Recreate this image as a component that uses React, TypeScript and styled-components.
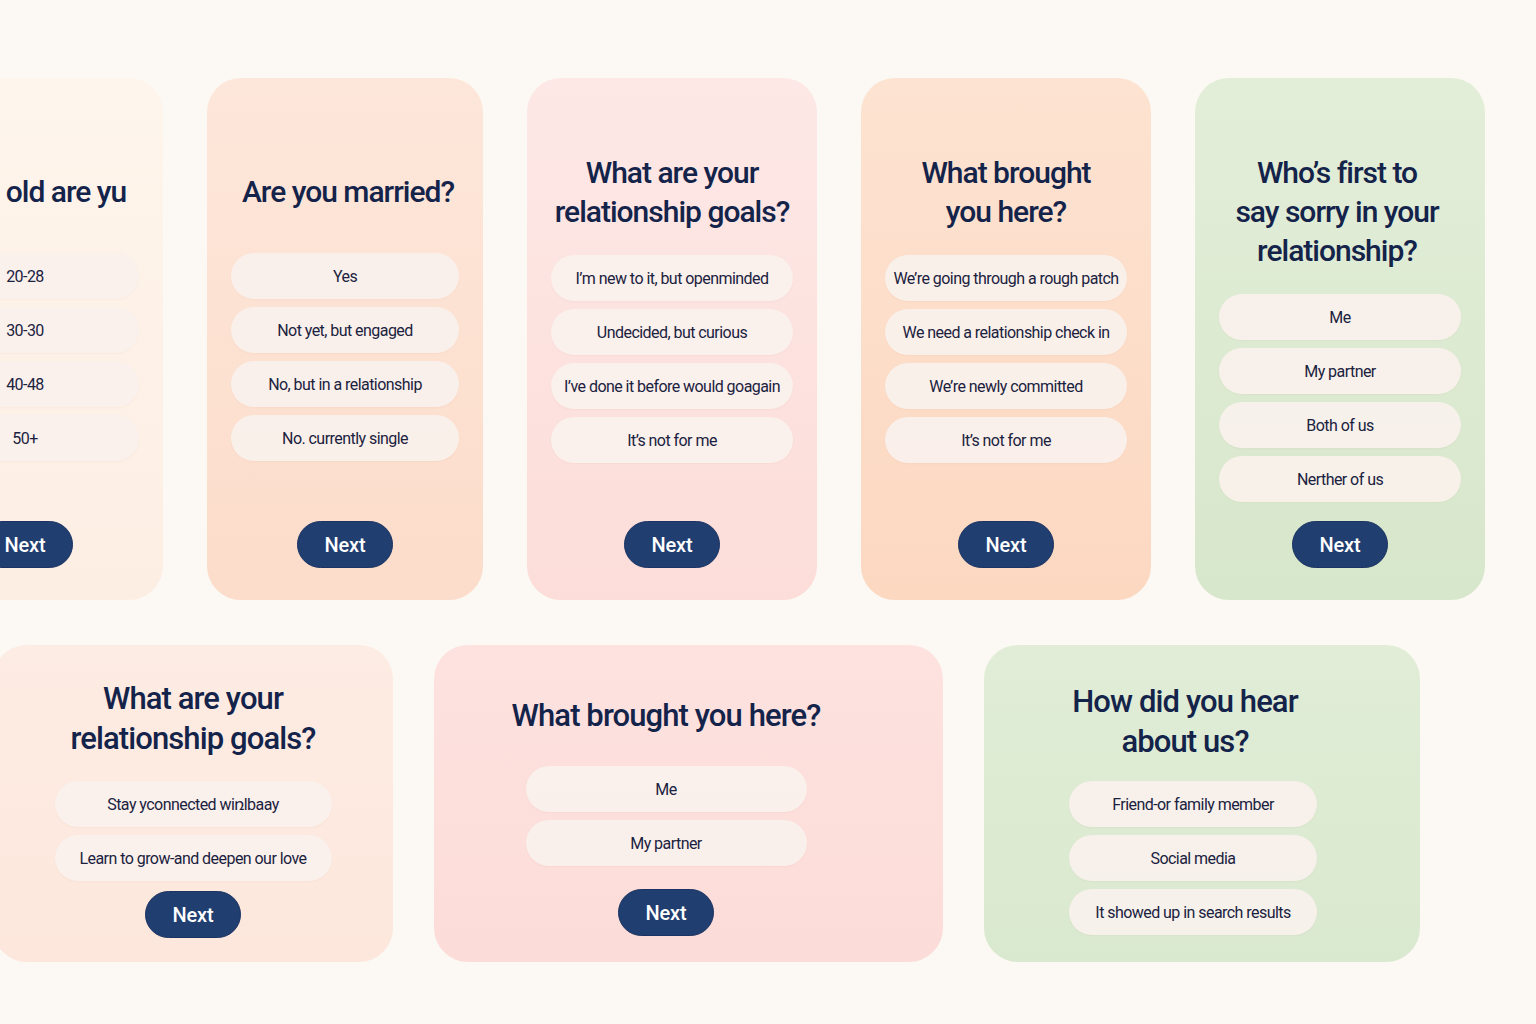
import styled, { createGlobalStyle } from 'styled-components';

const GlobalStyle = createGlobalStyle`
  html, body {
    margin: 0;
    padding: 0;
    background: #fcf8f3;
    overflow: hidden;
  }
  body {
    font-family: Roboto, 'Liberation Sans', sans-serif;
  }
`;

type TopCardData = {
  title: string[];
  options: string[];
  width: number;
  bg: string;
  titleShift?: number;
};

type BottomCardData = {
  title: string[];
  options: string[];
  width: number;
  optionWidth: number;
  bg: string;
  padTop: number;
  padRight: number;
  titleGap: number;
  titleShift?: number;
  buttonGap?: number;
};

const topCards: TopCardData[] = [
  {
    title: ['How old are yu'],
    options: ['20-28', '30-30', '40-48', '50+'],
    width: 276,
    bg: 'linear-gradient(180deg, #fef5ec 0%, #fdeee3 100%)',
    titleShift: 18,
  },
  {
    title: ['Are you married?'],
    options: ['Yes', 'Not yet, but engaged', 'No, but in a relationship', 'No. currently single'],
    width: 276,
    bg: 'linear-gradient(180deg, #fde7da 0%, #fcdcca 100%)',
    titleShift: 6,
  },
  {
    title: ['What are your', 'relationship goals?'],
    options: [
      'I’m new to it, but openminded',
      'Undecided, but curious',
      'I’ve done it before would goagain',
      'It’s not for me',
    ],
    width: 290,
    bg: 'linear-gradient(180deg, #fde8e6 0%, #fcddd9 100%)',
  },
  {
    title: ['What brought', 'you here?'],
    options: [
      'We’re going through a rough patch',
      'We need a relationship check in',
      'We’re newly committed',
      'It’s not for me',
    ],
    width: 290,
    bg: 'linear-gradient(180deg, #fde3d1 0%, #fcd8c1 100%)',
  },
  {
    title: ['Who’s first to', 'say sorry in your', 'relationship?'],
    options: ['Me', 'My partner', 'Both of us', 'Nerther of us'],
    width: 290,
    bg: 'linear-gradient(180deg, #e3eed9 0%, #d7e7cb 100%)',
    titleShift: -6,
  },
];

const bottomCards: BottomCardData[] = [
  {
    title: ['What are your', 'relationship goals?'],
    options: ['Stay yconnected wiռlbaay', 'Learn to grow-and deepen our love'],
    width: 400,
    optionWidth: 277,
    bg: 'linear-gradient(180deg, #fdece3 0%, #fde7dc 100%)',
    padTop: 34,
    padRight: 0,
    titleGap: 22,
    buttonGap: 10,
  },
  {
    title: ['What brought you here?'],
    options: ['Me', 'My partner'],
    width: 509,
    optionWidth: 281,
    bg: 'linear-gradient(180deg, #fde2df 0%, #fcdcd8 100%)',
    padTop: 51,
    padRight: 45,
    titleGap: 30,
    buttonGap: 23,
  },
  {
    title: ['How did you hear', 'about us?'],
    options: ['Friend-or family member', 'Social media', 'It showed up in search results'],
    width: 436,
    optionWidth: 248,
    bg: 'linear-gradient(180deg, #e1edd7 0%, #d9e9cf 100%)',
    padTop: 37,
    padRight: 18,
    titleGap: 19,
    titleShift: -16,
  },
];

const App = () => {
  return (
    <>
      <GlobalStyle />
      <Page>
        <TopRow>
          {topCards.map((card, i) => (
            <TopCard key={i} $width={card.width} $bg={card.bg}>
              <TopTitle $shift={card.titleShift ?? 0}>
                {card.title.map((line) => (
                  <span key={line}>{line}</span>
                ))}
              </TopTitle>
              <OptionList>
                {card.options.map((opt) => (
                  <Option key={opt}>{opt}</Option>
                ))}
              </OptionList>
              <NextButton $mt="auto">Next</NextButton>
            </TopCard>
          ))}
        </TopRow>
        <BottomRow>
          {bottomCards.map((card, i) => (
            <BottomCard
              key={i}
              $width={card.width}
              $bg={card.bg}
              $padTop={card.padTop}
              $padRight={card.padRight}
            >
              <BottomTitle $gap={card.titleGap} $shift={card.titleShift ?? 0}>
                {card.title.map((line) => (
                  <span key={line}>{line}</span>
                ))}
              </BottomTitle>
              <OptionList $width={card.optionWidth}>
                {card.options.map((opt) => (
                  <Option key={opt}>{opt}</Option>
                ))}
              </OptionList>
              {card.buttonGap !== undefined && (
                <NextButton $mt={`${card.buttonGap}px`}>Next</NextButton>
              )}
            </BottomCard>
          ))}
        </BottomRow>
      </Page>
    </>
  );
};

const Page = styled.main`
  width: 1536px;
  height: 1024px;
  padding-top: 78px;
  box-sizing: border-box;
  display: flex;
  flex-direction: column;
  gap: 45px;
  overflow: hidden;
`;

const TopRow = styled.div`
  display: flex;
  gap: 44px;
  margin-left: -113px;
`;

const BottomRow = styled.div`
  display: flex;
  gap: 41px;
  margin-left: -7px;
`;

const CardBase = styled.section<{ $width: number; $bg: string }>`
  flex-shrink: 0;
  width: ${(p) => p.$width}px;
  background: ${(p) => p.$bg};
  border-radius: 34px;
  box-sizing: border-box;
  display: flex;
  flex-direction: column;
  align-items: center;
`;

const TopCard = styled(CardBase)`
  height: 522px;
  padding: 75px 24px 32px;
`;

const BottomCard = styled(CardBase)<{ $padTop: number; $padRight: number }>`
  height: 317px;
  padding-top: ${(p) => p.$padTop}px;
  padding-right: ${(p) => p.$padRight}px;
`;

/* $shift moves a centred title sideways: positive to the right, negative to the left */
const TopTitle = styled.h2<{ $shift: number }>`
  margin: 0 0 24px;
  margin-left: ${(p) => (p.$shift > 0 ? p.$shift : 0)}px;
  margin-right: ${(p) => (p.$shift < 0 ? -p.$shift : 0)}px;
  min-height: 76px;
  display: flex;
  flex-direction: column;
  justify-content: center;
  align-items: center;
  text-align: center;
  white-space: nowrap;
  font-family: Roboto, 'Liberation Sans', sans-serif;
  font-weight: 500;
  font-size: 30px;
  line-height: 39px;
  letter-spacing: -1px;
  color: #14234a;
`;

const BottomTitle = styled.h2<{ $gap: number; $shift: number }>`
  margin: 0 0 ${(p) => p.$gap}px;
  margin-right: ${(p) => (p.$shift < 0 ? -p.$shift : 0)}px;
  display: flex;
  flex-direction: column;
  align-items: center;
  text-align: center;
  white-space: nowrap;
  font-family: Roboto, 'Liberation Sans', sans-serif;
  font-weight: 500;
  font-size: 31px;
  line-height: 40px;
  letter-spacing: -0.9px;
  color: #14234a;
`;

const OptionList = styled.div<{ $width?: number }>`
  width: ${(p) => (p.$width ? `${p.$width}px` : '100%')};
  display: flex;
  flex-direction: column;
  gap: 8px;
`;

const Option = styled.div`
  height: 46px;
  border-radius: 23px;
  background: rgba(250, 241, 237, 0.92);
  box-shadow: 0 1px 2px rgba(180, 120, 100, 0.06);
  display: flex;
  align-items: center;
  justify-content: center;
  white-space: nowrap;
  font-family: Roboto, 'Liberation Sans', sans-serif;
  font-size: 16px;
  letter-spacing: -0.55px;
  color: #1a2240;
`;

const NextButton = styled.button<{ $mt: string }>`
  margin-top: ${(p) => p.$mt};
  height: 47px;
  padding: 0 27px;
  flex-shrink: 0;
  border-radius: 24px;
  border: 1.5px solid #1a3362;
  background: #213e70;
  color: #ffffff;
  font-family: Roboto, 'Liberation Sans', sans-serif;
  font-weight: 500;
  font-size: 20px;
  letter-spacing: -0.2px;
  cursor: pointer;
`;

export default App;
